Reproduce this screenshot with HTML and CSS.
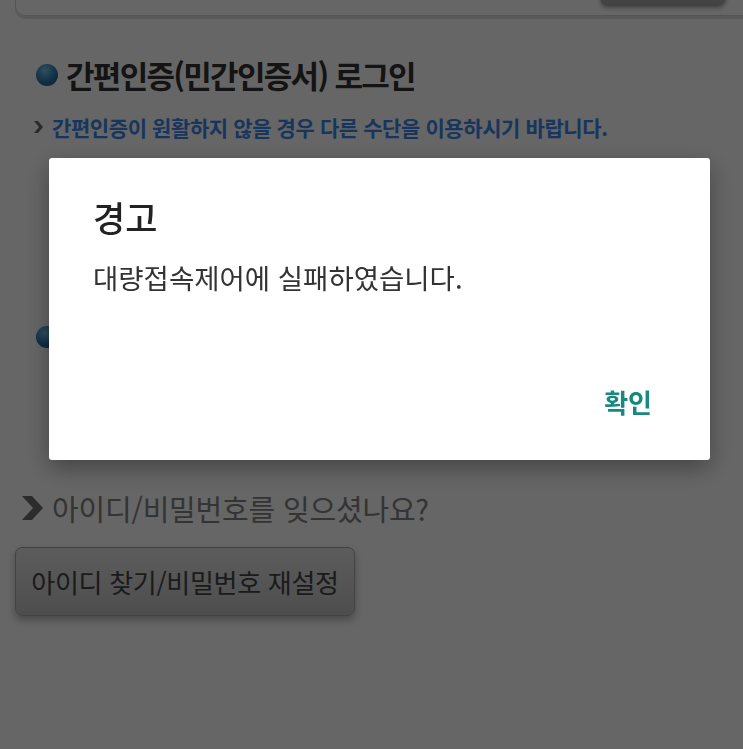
FILE: index.html
```html
<!DOCTYPE html>
<html lang="ko">
  <head>
    <meta charset="UTF-8" />
    <meta name="viewport" content="width=device-width, initial-scale=1.0" />
    <title>로그인</title>
    <link rel="stylesheet" href="styles.css">
  </head>
  <body>
    <!-- Previous login panel (scrolled past) -->
    <div class="top-card">
      <div class="top-bar"></div>
      <div class="top-btn"></div>
    </div>

    <!-- Simple auth section -->
    <section class="section">
      <h2 class="sec-title"><span class="bullet"></span>간편인증(민간인증서) 로그인</h2>
      <p class="sec-note">
        <svg class="note-arrow" width="11" height="14" viewBox="0 0 11 14">
          <polygon points="1,1 5,1 10,7 5,13 1,13 6,7" fill="#6a6a6a" />
        </svg>
        <span>간편인증이 원활하지 않을 경우 다른 수단을 이용하시기 바랍니다.</span>
      </p>
    </section>

    <section class="section section-cert">
      <h2 class="sec-title"><span class="bullet"></span>공동인증서 로그인</h2>
    </section>

    <!-- Account help -->
    <div class="forgot">
      <svg class="chev" width="24" height="26" viewBox="0 0 24 26">
        <polygon points="2,1 12,1 23,13 12,25 2,25 13,13" fill="#6e6e6e" />
      </svg>
      <span>아이디/비밀번호를 잊으셨나요?</span>
    </div>
    <button class="find-btn">아이디 찾기/비밀번호 재설정</button>

    <!-- Alert dialog -->
    <div class="overlay"></div>
    <div class="dialog">
      <h3 class="dlg-title">경고</h3>
      <p class="dlg-msg">대량접속제어에 실패하였습니다.</p>
      <div class="dlg-actions">
        <button class="dlg-btn">확인</button>
      </div>
    </div>
  </body>
</html>
```

FILE: styles.css
```css
* {
  margin: 0;
  padding: 0;
  box-sizing: border-box;
  font-family: "Noto Sans CJK KR", "Noto Sans", sans-serif;
}

body {
  background-color: #fff;
  color: #333;
  height: 749px;
  overflow: hidden;
}

.top-card {
  height: 60px;
  margin: -44px -12px 0 15px;
  border: 1px solid #d2d2d2;
  border-radius: 10px;
  box-shadow: 0 3px 0 #e2e2e2;
  display: flex;
  justify-content: space-between;
  align-items: flex-end;
  padding: 0 28px 9px 21px;
}

.top-bar {
  width: 54px;
  height: 4px;
  margin-bottom: 9px;
  background-color: #7a7a7a;
}

.top-btn {
  width: 126px;
  height: 30px;
  border-radius: 8px;
  background: linear-gradient(#c8c8c8, #a4a4a4);
  box-shadow: 0 2px 4px rgba(0, 0, 0, 0.35);
}

.section {
  padding-left: 36px;
  margin-top: 42px;
}

.sec-title {
  display: flex;
  align-items: center;
  gap: 8px;
  font-size: 31px;
  line-height: 34px;
  letter-spacing: -1.7px;
  font-weight: bold;
  color: #333;
}

.bullet {
  width: 22px;
  height: 22px;
  border-radius: 50%;
  background: radial-gradient(circle at 40% 30%, #7cc3ee, #2a78b0 55%, #1b4f78);
  flex-shrink: 0;
}

.sec-note {
  display: flex;
  align-items: center;
  gap: 8px;
  margin-top: 22px;
  margin-left: -3px;
  font-size: 21px;
  line-height: 26px;
  letter-spacing: -0.4px;
  font-weight: bold;
  color: #3a86e8;
}

.section-cert {
  margin-top: 180px;
}

.forgot {
  display: flex;
  align-items: center;
  gap: 8px;
  margin: 136px 0 0 20px;
  font-size: 29px;
  line-height: 36px;
  letter-spacing: -0.2px;
  color: #828282;
}

.find-btn {
  display: block;
  width: 340px;
  height: 69px;
  margin: 21px 0 0 15px;
  border: 1px solid #a8a8a8;
  border-radius: 7px;
  background: linear-gradient(#e6e6e6, #c2c2c2);
  box-shadow: 0 4px 8px rgba(0, 0, 0, 0.3);
  font-size: 26px;
  letter-spacing: -0.3px;
  color: #444;
}

.overlay {
  position: fixed;
  inset: 0;
  background-color: rgba(0, 0, 0, 0.6);
}

.dialog {
  position: fixed;
  left: 49px;
  top: 158px;
  width: 661px;
  height: 302px;
  background-color: #fff;
  border-radius: 3px;
  box-shadow: 0 8px 24px rgba(0, 0, 0, 0.35);
  display: flex;
  flex-direction: column;
  padding: 38px 44px 31px 44px;
}

.dlg-title {
  font-size: 35px;
  line-height: 42px;
  font-weight: 500;
  color: #222;
}

.dlg-msg {
  margin-top: 21px;
  font-size: 27.5px;
  line-height: 36px;
  color: #333;
}

.dlg-actions {
  margin-top: auto;
  display: flex;
  justify-content: flex-end;
}

.dlg-btn {
  border: none;
  background: none;
  padding: 11px 14px;
  font-size: 26px;
  line-height: 32px;
  font-weight: bold;
  color: #178a7f;
}
```
